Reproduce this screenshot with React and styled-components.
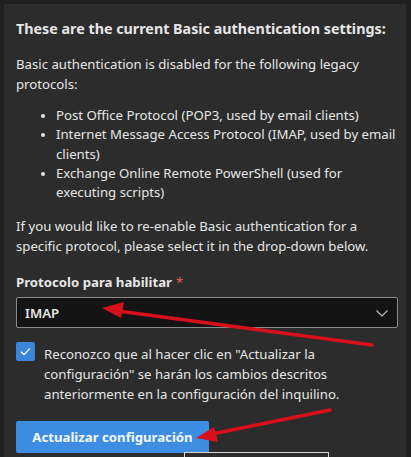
import React from "react"
import styled, { createGlobalStyle } from "styled-components"

const Global = createGlobalStyle`
  html, body {
    margin: 0;
    padding: 0;
    background: #1f1f1f;
    height: 100%;
  }
  #root {
    height: 100%;
  }
`;

const Page = styled.div`
  position: relative;
  height: 457px;
  overflow: hidden;
  padding: 4px 5px 0 4px;
  box-sizing: border-box;
  font-family: "Noto Sans", "Open Sans", sans-serif;
  color: #e6e6e6;
`;

const Panel = styled.div`
  background: #2c2c2c;
  height: 100%;
  padding: 14px 8px 0 12px;
  box-sizing: border-box;
  display: flex;
  flex-direction: column;
`;

const Title = styled.h2`
  margin: 0;
  font-size: 14.3px;
  font-weight: 700;
  line-height: 22px;
  white-space: nowrap;
`;

const Para = styled.p`
  margin: ${p => p.top || 0}px 0 0;
  font-size: 13.2px;
  line-height: 20px;
`;

const List = styled.ul`
  margin: 12px 0 0;
  padding-left: 40px;
  font-size: 13.2px;
  line-height: 19.3px;
  li::marker {
    font-size: 12px;
  }
`;

const Label = styled.label`
  margin-top: 16px;
  font-size: 13.2px;
  font-weight: 700;
  line-height: 20px;
  span {
    color: #e0604f;
    font-weight: 400;
    margin-left: 4px;
  }
`;

const Select = styled.div`
  margin-top: 5px;
  width: 382px;
  height: 31px;
  box-sizing: border-box;
  border: 1px solid #8a8a8a;
  border-radius: 2px;
  background: #141414;
  display: flex;
  align-items: center;
  justify-content: space-between;
  padding: 0 8px 0 8px;
  font-size: 13.2px;
  font-weight: 600;
`;

const CheckRow = styled.div`
  margin-top: 13px;
  display: flex;
  gap: 9px;
  align-items: flex-start;
`;

const Box = styled.div`
  flex: none;
  width: 19px;
  height: 19px;
  margin-top: 1px;
  background: #3a87d9;
  border-radius: 2px;
  display: flex;
  align-items: center;
  justify-content: center;
`;

const CheckText = styled.div`
  margin-top: 3px;
  font-size: 13.2px;
  line-height: 20px;
  width: 330px;
`;

const Button = styled.button`
  margin-top: 17px;
  align-self: flex-start;
  width: 193px;
  height: 32px;
  border: none;
  border-radius: 2px;
  background: #3d8ee2;
  color: #f4f7fb;
  font-family: inherit;
  font-size: 13.2px;
  font-weight: 700;
`;

const Ghost = styled.div`
  position: absolute;
  left: 184px;
  top: 452px;
  width: 143px;
  height: 20px;
  border: 1px solid #d8d8d8;
  border-bottom: none;
`;

const Overlay = styled.svg`
  position: absolute;
  inset: 0;
  pointer-events: none;
`;

function Chevron() {
  return (
    <svg width="14" height="14" viewBox="0 0 14 14">
      <path d="M1.5 4.5 L7 10 L12.5 4.5" fill="none" stroke="#bdbdbd" strokeWidth="1.2" />
    </svg>
  )
}

function Check() {
  return (
    <svg width="13" height="13" viewBox="0 0 13 13">
      <path d="M2 6.8 L5 9.6 L11 3.4" fill="none" stroke="#ffffff" strokeWidth="1.3" />
    </svg>
  )
}

export default function App() {
  return (
    <>
      <Global />
      <Page>
        <Panel>
          <Title>These are the current Basic authentication settings:</Title>
          <Para top={14}>Basic authentication is disabled for the following legacy protocols:</Para>
          <List>
            <li>Post Office Protocol (POP3, used by email clients)</li>
            <li>Internet Message Access Protocol (IMAP, used by email clients)</li>
            <li>Exchange Online Remote PowerShell (used for executing scripts)</li>
          </List>
          <Para top={14}>If you would like to re-enable Basic authentication for a specific protocol, please select it in the drop-down below.</Para>
          <Label>Protocolo para habilitar<span>*</span></Label>
          <Select>
            <span>IMAP</span>
            <Chevron />
          </Select>
          <CheckRow>
            <Box><Check /></Box>
            <CheckText>Reconozco que al hacer clic en "Actualizar la configuración" se harán los cambios descritos anteriormente en la configuración del inquilino.</CheckText>
          </CheckRow>
          <Button>Actualizar configuración</Button>
        </Panel>
        <Ghost />
        <Overlay width="411" height="457">
          <line x1="372" y1="345" x2="118" y2="311" stroke="#d8101c" strokeWidth="3.5" strokeLinecap="round" />
          <polygon points="102,308 124,302 121,318" fill="#d8101c" />
          <line x1="330" y1="410" x2="212" y2="434" stroke="#d8101c" strokeWidth="3.5" strokeLinecap="round" />
          <polygon points="196,438 214,427 218,442" fill="#d8101c" />
        </Overlay>
      </Page>
    </>
  )
}
